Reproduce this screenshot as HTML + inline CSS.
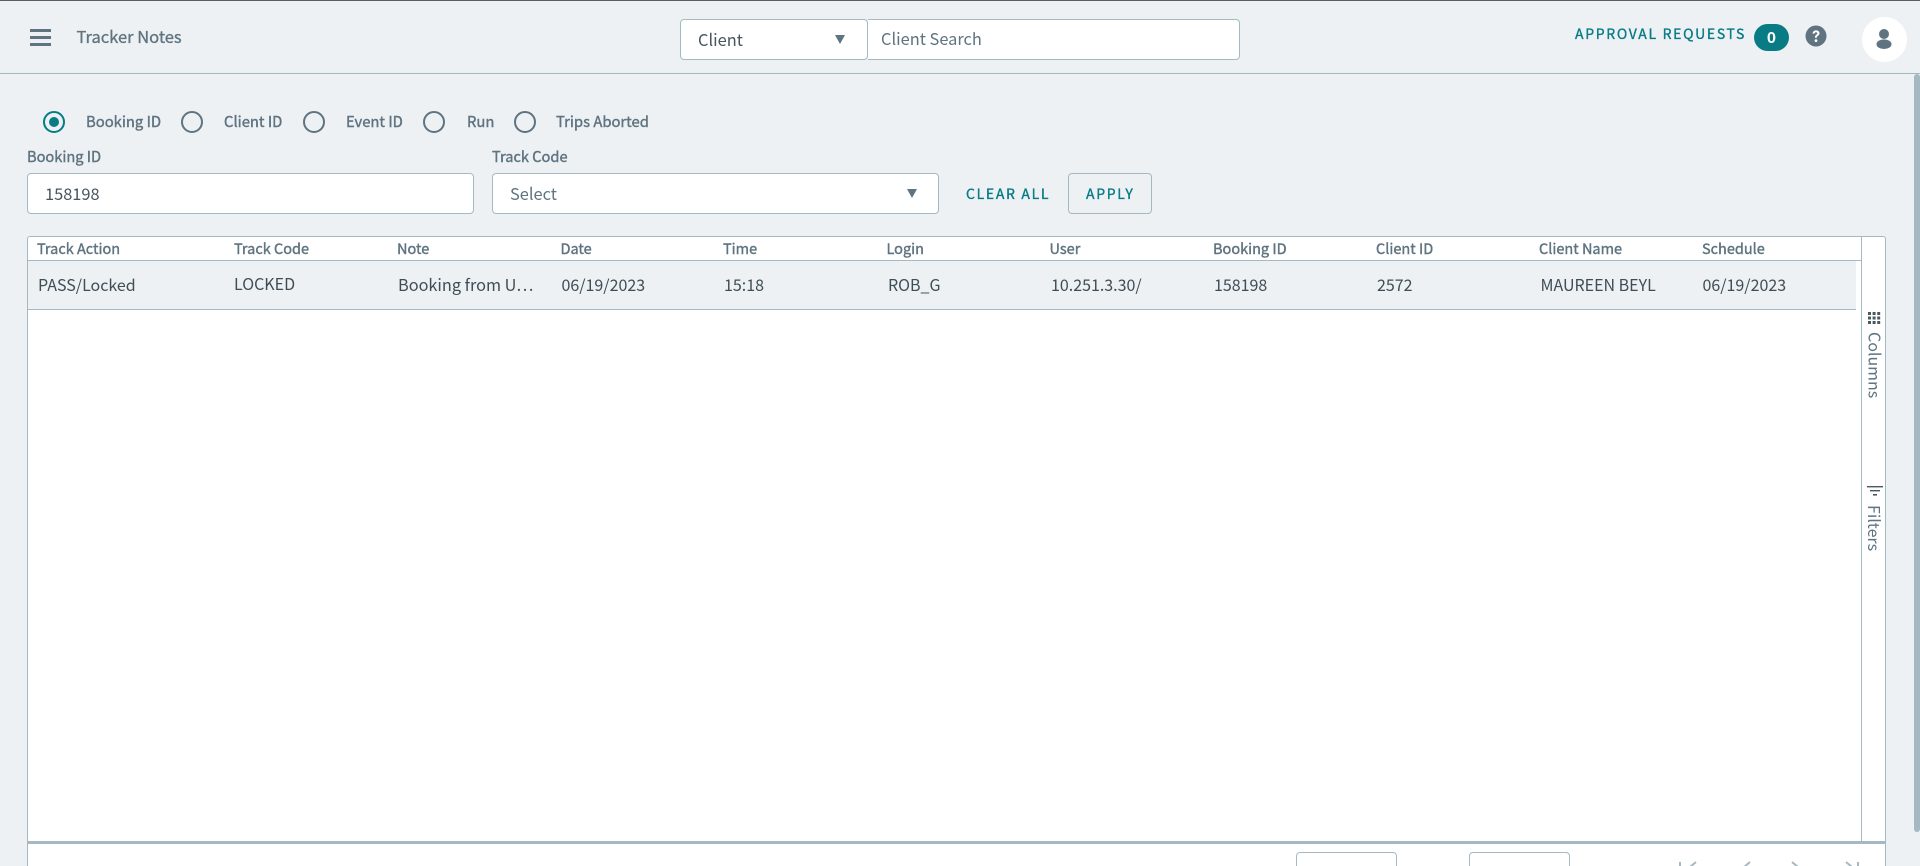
<!DOCTYPE html>
<html><head><meta charset="utf-8"><title>Tracker Notes</title>
<style>
html,body{margin:0;padding:0;width:1920px;height:866px;overflow:hidden;background:#edf1f4}
body{position:relative;font-family:"Noto Sans CJK JP","Liberation Sans",sans-serif;color:#5f7480}
.a{position:absolute;box-sizing:border-box}
.t{position:absolute;white-space:nowrap;line-height:20px;height:20px;transform:translateY(-10px)}
.box{position:absolute;box-sizing:border-box;background:#fff;border:1px solid #a5b9c3;border-radius:4px}
.r{position:absolute;box-sizing:border-box;width:22px;height:22px;border:2px solid #5f7480;border-radius:50%;top:111px}
.rl{font-size:14.8px;-webkit-text-stroke:.4px #5f7480}
.fl{font-size:14.6px;-webkit-text-stroke:.4px #5f7480}
.v{font-size:16px;color:#46555e}
.h{font-size:14.5px;-webkit-text-stroke:.4px #5f7480}
.c{font-size:16px;color:#3f4d55}
.tri{position:absolute;width:0;height:0;border-left:5px solid transparent;border-right:5px solid transparent;border-top:9px solid #5f7480}
.teal{color:#087b85;-webkit-text-stroke:.35px #087b85;font-size:14px;letter-spacing:1.68px}
</style></head><body>
<div class="a" style="left:0;top:0;width:1920px;height:1px;background:#555f66"></div>
<div class="a" style="left:0;top:73px;width:1920px;height:1px;background:#a5b9c3"></div>
<div class="a" style="left:30px;top:29px;width:21px;height:3px;background:#5f7480"></div>
<div class="a" style="left:30px;top:36px;width:21px;height:3px;background:#5f7480"></div>
<div class="a" style="left:30px;top:43px;width:21px;height:3px;background:#5f7480"></div>
<div class="t" style="left:76.5px;top:36px;font-size:16.5px;-webkit-text-stroke:.35px #5f7480">Tracker Notes</div>

<div class="box" style="left:868px;top:19px;width:372px;height:41px;border-radius:0 4px 4px 0;border-left:0"></div>
<div class="box" style="left:680px;top:19px;width:188px;height:41px"></div>
<div class="t v" style="left:698px;top:39px;font-size:16.4px">Client</div>
<div class="tri" style="left:835px;top:35px"></div>
<div class="t" style="left:881px;top:38px;font-size:16.4px">Client Search</div>

<div class="t teal" style="left:1575px;top:34px">APPROVAL REQUESTS</div>
<div class="a" style="left:1754px;top:24px;width:35px;height:27px;border-radius:14px;background:#087b85"></div>
<div class="t" style="left:1754px;top:37px;width:35px;text-align:center;font-size:15.5px;font-weight:700;color:#fff">0</div>
<svg class="a" style="left:1805px;top:25px" width="22" height="22" viewBox="0 0 22 22"><circle cx="11" cy="11" r="10.5" fill="#5f7480"/><path d="M7.6 8.6c0-2 1.5-3.2 3.5-3.2s3.4 1.1 3.4 2.9c0 2.3-2.6 2.3-2.6 4.4H9.9c0-3 2.5-3 2.5-4.3 0-.7-.6-1.2-1.4-1.2s-1.4.5-1.4 1.4z" fill="#fff"/><circle cx="11" cy="15.6" r="1.4" fill="#fff"/></svg>
<div class="a" style="left:1862px;top:17px;width:45px;height:45px;border-radius:50%;background:#fff"></div>
<svg class="a" style="left:1874px;top:27px" width="20" height="24" viewBox="0 0 20 24"><circle cx="10" cy="7" r="5" fill="#5f7480"/><ellipse cx="10" cy="17.2" rx="7.5" ry="4.8" fill="#5f7480"/></svg>

<div class="r" style="left:43px;border-color:#087b85"></div>
<div class="a" style="left:49px;top:117px;width:10px;height:10px;border-radius:50%;background:#087b85"></div>
<div class="t rl" style="left:86px;top:122px">Booking ID</div>
<div class="r" style="left:181px"></div>
<div class="t rl" style="left:224px;top:122px">Client ID</div>
<div class="r" style="left:303px"></div>
<div class="t rl" style="left:346px;top:122px">Event ID</div>
<div class="r" style="left:423px"></div>
<div class="t rl" style="left:467px;top:122px">Run</div>
<div class="r" style="left:514px"></div>
<div class="t rl" style="left:556px;top:122px">Trips Aborted</div>

<div class="t fl" style="left:27px;top:157px">Booking ID</div>
<div class="t fl" style="left:492px;top:157px">Track Code</div>
<div class="box" style="left:27px;top:173px;width:447px;height:41px"></div>
<div class="t v" style="left:45px;top:193px;font-size:16.4px">158198</div>
<div class="box" style="left:492px;top:173px;width:447px;height:41px"></div>
<div class="t" style="left:510px;top:193px;font-size:16.4px">Select</div>
<div class="tri" style="left:907px;top:189px"></div>
<div class="t teal" style="left:966px;top:194px">CLEAR ALL</div>
<div class="a" style="left:1068px;top:173px;width:84px;height:41px;border:1px solid #a5b9c3;border-radius:4px"></div>
<div class="t teal" style="left:1086px;top:194px">APPLY</div>

<div class="a" style="left:27px;top:236px;width:1859px;height:630px;background:#fff;border:1px solid #a5b9c3;border-bottom:0;border-radius:3px 3px 0 0"></div>
<div class="a" style="left:28px;top:260px;width:1833px;height:1px;background:#a5b9c3"></div>
<div class="a" style="left:28px;top:261px;width:1828px;height:48px;background:#edf1f4;border-bottom:1px solid #a5b9c3;box-sizing:content-box"></div>
<div class="a" style="left:1861px;top:237px;width:1px;height:604px;background:#a5b9c3"></div>
<div class="a" style="left:27px;top:841px;width:1859px;height:3px;background:#a5b9c3"></div>

<div class="t h" style="left:37px;top:249px">Track Action</div>
<div class="t h" style="left:234px;top:249px">Track Code</div>
<div class="t h" style="left:397px;top:249px">Note</div>
<div class="t h" style="left:560.5px;top:249px">Date</div>
<div class="t h" style="left:723px;top:249px">Time</div>
<div class="t h" style="left:886.5px;top:249px">Login</div>
<div class="t h" style="left:1049.5px;top:249px">User</div>
<div class="t h" style="left:1213px;top:249px">Booking ID</div>
<div class="t h" style="left:1376px;top:249px">Client ID</div>
<div class="t h" style="left:1539px;top:249px">Client Name</div>
<div class="t h" style="left:1702px;top:249px">Schedule</div>

<div class="t c" style="left:38px;top:284px">PASS/Locked</div>
<div class="t c" style="left:234px;top:283px">LOCKED</div>
<div class="t c" style="left:398px;top:284px;font-size:16.3px">Booking from U…</div>
<div class="t c" style="left:561.5px;top:284px">06/19/2023</div>
<div class="t c" style="left:724px;top:284px">15:18</div>
<div class="t c" style="left:888px;top:284px">ROB_G</div>
<div class="t c" style="left:1051px;top:284px">10.251.3.30/</div>
<div class="t c" style="left:1214px;top:284px">158198</div>
<div class="t c" style="left:1377px;top:284px">2572</div>
<div class="t c" style="left:1540.5px;top:284px">MAUREEN BEYL</div>
<div class="t c" style="left:1702.5px;top:284px">06/19/2023</div>

<svg class="a" style="left:1868px;top:312px" width="14" height="14" viewBox="0 0 14 14" fill="#4a5860"><rect x="0" y="0" width="3" height="3"/><rect x="4.6" y="0" width="3" height="3"/><rect x="9.2" y="0" width="3" height="3"/><rect x="0" y="4.5" width="3" height="3"/><rect x="4.6" y="4.5" width="3" height="3"/><rect x="9.2" y="4.5" width="3" height="3"/><rect x="0" y="9" width="3" height="3"/><rect x="4.6" y="9" width="3" height="3"/><rect x="9.2" y="9" width="3" height="3"/></svg>
<div class="a" style="left:1865.5px;top:332px;width:20px;line-height:20px;writing-mode:vertical-rl;font-size:16px;color:#5f7480;white-space:nowrap">Columns</div>
<svg class="a" style="left:1866px;top:485px" width="18" height="12" viewBox="0 0 18 12" fill="#4a5860"><rect x="1" y="1" width="16" height="1.4"/><rect x="4" y="5" width="10" height="1.4"/><rect x="7" y="9" width="4" height="1.6"/></svg>
<div class="a" style="left:1865px;top:505px;width:20px;line-height:20px;writing-mode:vertical-rl;font-size:16px;color:#5f7480;white-space:nowrap">Filters</div>

<div class="box" style="left:1296px;top:852px;width:101px;height:30px"></div>
<div class="box" style="left:1469px;top:852px;width:101px;height:30px"></div>
<svg class="a" style="left:1670px;top:858px" width="200" height="8" viewBox="0 0 200 8" fill="none" stroke="#a5b9c3" stroke-width="2"><path d="M10 4V14M26 4l-6 5M80 4l-6 5M122 4l6 5M176 4l6 5M188 4V14"/></svg>

<div class="a" style="left:1914px;top:74px;width:6px;height:758px;background:#a5b9c3;border-radius:3px"></div>
</body></html>
